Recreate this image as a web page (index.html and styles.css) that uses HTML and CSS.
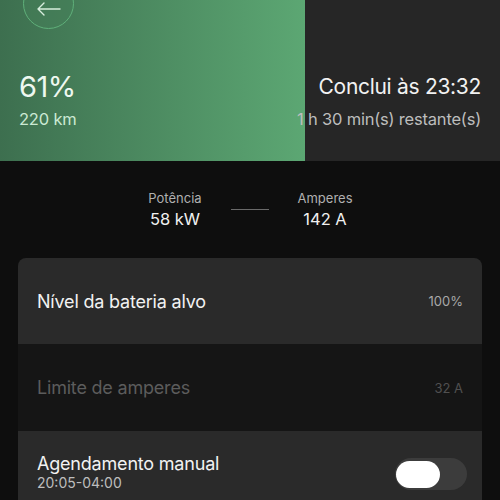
FILE: index.html
```html
<!DOCTYPE html>
<html lang="pt">
<head>
  <meta charset="UTF-8">
  <title>Carregamento</title>
  <link rel="stylesheet" href="styles.css">
</head>
<body>

  <header class="status" style="background-size: 61% 100%, auto;">
    <button class="back" aria-label="Voltar">
      <svg width="24" height="14" viewBox="0 0 24 14" fill="none" stroke="#d8eedd" stroke-width="1.4" stroke-linecap="round" stroke-linejoin="round">
        <path d="M23 7H1M7 1L1 7l6 6"/>
      </svg>
    </button>
    <div class="status-row">
      <div>
        <div class="big">61%</div>
        <div class="sub green">220 km</div>
      </div>
      <div class="right">
        <div class="big small">Conclui às 23:32</div>
        <div class="sub">1 h 30 min(s) restante(s)</div>
      </div>
    </div>
  </header>

  <section class="stats">
    <div class="stat">
      <span class="label">Potência</span>
      <span class="value">58 kW</span>
    </div>
    <div class="divider"></div>
    <div class="stat">
      <span class="label">Amperes</span>
      <span class="value">142 A</span>
    </div>
  </section>

  <div class="card">
    <div class="row">
      <span class="title">Nível da bateria alvo</span>
      <span class="val">100%</span>
    </div>
    <div class="row disabled">
      <span class="title">Limite de amperes</span>
      <span class="val">32 A</span>
    </div>
    <div class="row last">
      <div>
        <div class="title">Agendamento manual</div>
        <div class="time">20:05-04:00</div>
      </div>
      <div class="toggle"><div class="knob"></div></div>
    </div>
  </div>

</body>
</html>
```
FILE: styles.css
```css
* { box-sizing: border-box; }
body { margin: 0; background: #0e0e0e; color: #f2f2f2; font-family: Inter, "Noto Sans", sans-serif; width: 500px; height: 500px; overflow: hidden; }

.status { height: 161px; position: relative; padding: 0 19px; background: linear-gradient(to right, #3d6f4f, #5ca773) no-repeat, #262626; }
.back { position: absolute; left: 23px; top: -22px; width: 51px; height: 51px; border-radius: 50%; border: 1.5px solid #5fb07a; background: rgba(70, 130, 90, 0.4); display: flex; align-items: center; justify-content: center; padding: 0; padding-top: 10px; }
.status-row { display: flex; justify-content: space-between; padding-top: 70px; }
.big { font-size: 29px; line-height: 34px; letter-spacing: -0.5px; color: #eef8f0; }
.big.small { font-size: 21px; line-height: 34px; letter-spacing: -0.3px; color: #f2f2f2; }
.sub { font-size: 16.5px; margin-top: 5px; color: #bdbdbd; letter-spacing: -0.2px; }
.sub.green { color: #cbe9d3; }
.right { text-align: right; }

.stats { display: flex; justify-content: center; align-items: center; gap: 19px; padding-top: 29px; }
.stat { display: flex; flex-direction: column; align-items: center; width: 70px; }
.stat .label { font-size: 13px; color: #b0b0b0; }
.stat .value { font-size: 16.5px; margin-top: 3px; color: #f0f0f0; }
.divider { width: 38px; height: 1px; background: #6a6a6a; margin: 0 2px; }

.card { margin: 29px 18px 0; border-radius: 8px 8px 0 0; overflow: hidden; }
.row { display: flex; align-items: center; justify-content: space-between; height: 86px; padding: 0 19px; background: #2a2a2a; }
.row.disabled { background: #151515; height: 87px; color: #5c5c5c; }
.row.last { align-items: flex-start; padding-top: 22px; }
.title { font-size: 18px; letter-spacing: -0.2px; }
.val { font-size: 13px; color: #a8a8a8; }
.disabled .val { color: #505050; }
.time { font-size: 14px; color: #bdbdbd; margin-top: 0; }
.toggle { width: 72px; height: 32px; border-radius: 16px; background: #3c3c3c; padding: 3px 0 0 1px; margin-top: 5px; margin-right: -4px; }
.knob { width: 44px; height: 27px; border-radius: 14px; background: #fff; }
```
